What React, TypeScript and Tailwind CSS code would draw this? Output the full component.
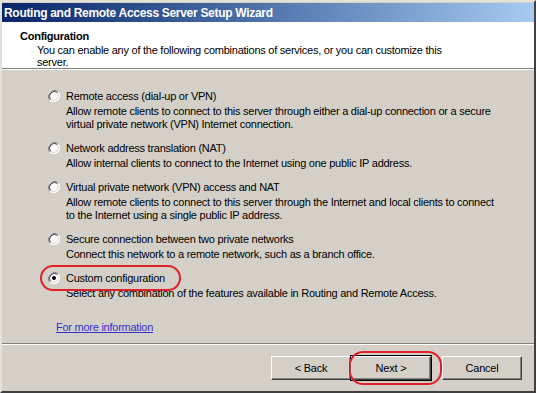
import React from 'react';

const options = [
  {
    label: 'Remote access (dial-up or VPN)',
    lines: [
      'Allow remote clients to connect to this server through either a dial-up connection or a secure',
      'virtual private network (VPN) Internet connection.',
    ],
  },
  {
    label: 'Network address translation (NAT)',
    lines: ['Allow internal clients to connect to the Internet using one public IP address.'],
  },
  {
    label: 'Virtual private network (VPN) access and NAT',
    lines: [
      'Allow remote clients to connect to this server through the Internet and local clients to connect',
      'to the Internet using a single public IP address.',
    ],
  },
  {
    label: 'Secure connection between two private networks',
    lines: ['Connect this network to a remote network, such as a branch office.'],
  },
  {
    label: 'Custom configuration',
    lines: ['Select any combination of the features available in Routing and Remote Access.'],
    checked: true,
  },
];

function Radio({ checked }: { checked?: boolean }) {
  return (
    <svg width="12" height="12" viewBox="0 0 12 12" className="shrink-0">
      <circle cx="6" cy="6" r="6" fill="#ffffff" />
      <path d="M10.2 1.8 A6 6 0 0 0 1.8 10.2" fill="none" stroke="#808080" strokeWidth="1" />
      <path d="M9.5 2.5 A5 5 0 0 0 2.5 9.5" fill="none" stroke="#404040" strokeWidth="1" />
      <path d="M1.8 10.2 A6 6 0 0 0 10.2 1.8" fill="none" stroke="#ffffff" strokeWidth="1" />
      <path d="M2.5 9.5 A5 5 0 0 0 9.5 2.5" fill="none" stroke="#d4d0c8" strokeWidth="1" />
      {checked && <circle cx="6" cy="6" r="2" fill="#000000" />}
    </svg>
  );
}

function Button({ label, className = '' }: { label: string; className?: string }) {
  return (
    <div
      className={`w-[80px] h-[24px] bg-[#d4d0c8] border border-t-white border-l-white border-r-[#404040] border-b-[#404040] shadow-[inset_-1px_-1px_0_#808080] flex items-center justify-center text-[11px] tracking-[-0.2px] text-black ${className}`}
    >
      {label}
    </div>
  );
}

export default function App() {
  return (
    <div
      className="relative w-[536px] h-[393px] bg-[#d4d0c8] flex flex-col border-t-2 border-l-2 border-t-[#e4e1d8] border-l-[#e4e1d8] border-r-2 border-b-2 border-r-[#404040] border-b-[#404040] overflow-hidden"
      style={{ fontFamily: '"Liberation Sans", Arial, sans-serif' }}
    >
      {/* Title bar */}
      <div className="h-[19px] mt-px flex items-center px-[2px] bg-gradient-to-r from-[#0a246a] to-[#a6caf0]">
        <span className="text-white font-bold text-[12px] leading-none tracking-[-0.3px]">
          Routing and Remote Access Server Setup Wizard
        </span>
      </div>

      {/* Header */}
      <div className="h-[47px] bg-white pl-[18px] pt-[8px] border-b border-b-[#808080] tracking-[-0.25px]">
        <div className="font-bold text-[11px] leading-[13px] text-black">Configuration</div>
        <div className="pl-[17px] mt-px text-[11px] leading-[12px] text-black">
          You can enable any of the following combinations of services, or you can customize this
          <br />
          server.
        </div>
      </div>
      <div className="h-px bg-white" />

      {/* Body */}
      <div className="flex-1 flex flex-col pt-[19px] pl-[46px] text-[11px] text-black tracking-[-0.25px]">
        <div className="flex flex-col gap-[10px]">
          {options.map((o) => (
            <div key={o.label} className="flex flex-col">
              <div className="flex items-center gap-[6px] h-[14px]">
                <Radio checked={o.checked} />
                <span className="leading-[14px]">{o.label}</span>
              </div>
              <div className="pl-[18px] mt-[2px] leading-[13px]">
                {o.lines.map((l) => (
                  <div key={l}>{l}</div>
                ))}
              </div>
            </div>
          ))}
        </div>
        <div className="mt-[21px] pl-[8px] leading-[13px]">
          <span className="text-[#3333cc] underline">For more information</span>
        </div>
      </div>

      {/* Footer */}
      <div className="h-px bg-[#808080]" />
      <div className="h-px bg-white" />
      <div className="h-[46px] flex items-start pt-[11px] pl-[269px]">
        <Button label="< Back" />
        <Button label="Next >" className="outline outline-1 outline-black" />
        <Button label="Cancel" className="ml-[11px]" />
      </div>

      {/* Red highlight marks */}
      <div className="absolute left-[38px] top-[263px] w-[141px] h-[26px] rounded-[13px] border-2 border-[#e0202a]" />
      <div className="absolute left-[347px] top-[349px] w-[93px] h-[34px] rounded-[14px] border-2 border-[#e0202a]" />
    </div>
  );
}
